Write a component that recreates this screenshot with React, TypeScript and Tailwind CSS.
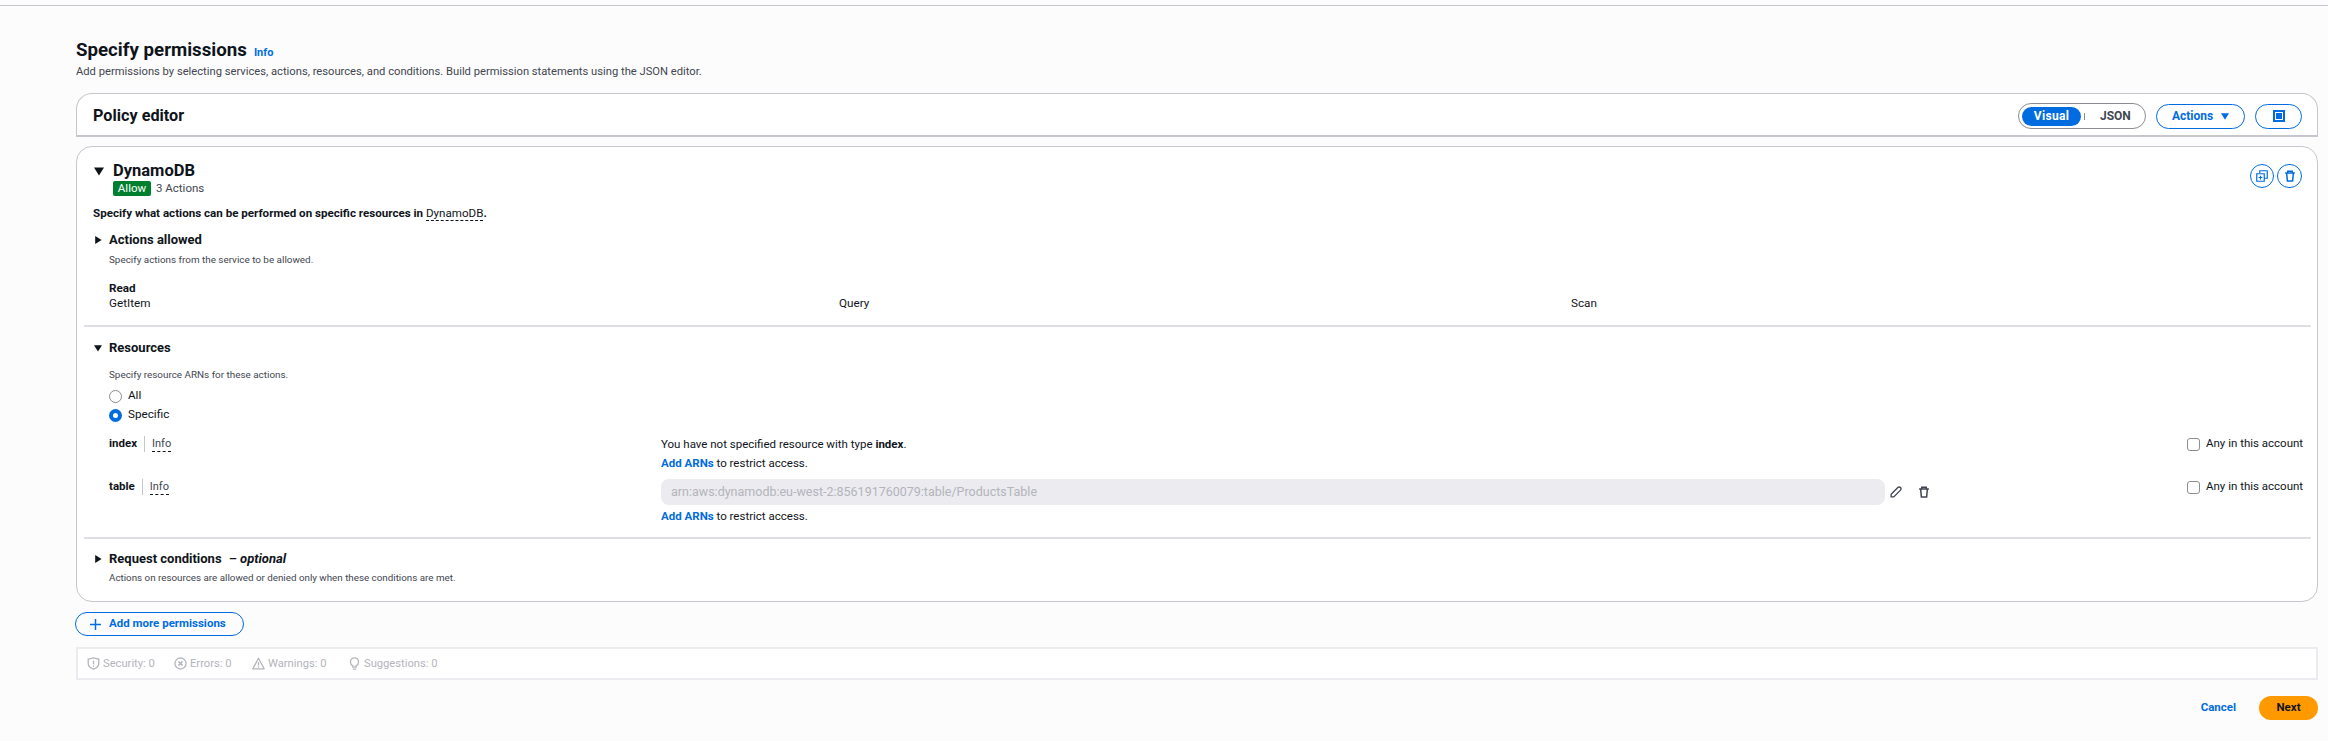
import React from 'react';

const Caret = ({ open, className }: { open?: boolean; className?: string }) => (
  <svg viewBox="0 0 10 10" className={className}>
    {open ? <path d="M0 1.5h10L5 9.5z" fill="#0f141a" /> : <path d="M1.5 0v10L9.5 5z" fill="#0f141a" />}
  </svg>
);

const TrashIcon = ({ className }: { className?: string }) => (
  <svg viewBox="0 0 16 16" fill="none" stroke="currentColor" strokeWidth="2" className={className}>
    <path d="M1.5 4h13M5 4V1.5h6V4M3.5 4l1 10.5h7l1-10.5" />
  </svg>
);

const ShieldIcon = () => (
  <svg viewBox="0 0 16 16" fill="none" stroke="#b4b4bb" strokeWidth="1.6" className="w-[13px] h-[13px]">
    <path d="M1.5 2.5 8 1l6.5 1.5V8c0 3.2-2.8 5.6-6.5 7-3.7-1.4-6.5-3.8-6.5-7z" />
    <path d="M8 4.5v4.5M8 10.5v1.5" />
  </svg>
);

const ErrorIcon = () => (
  <svg viewBox="0 0 16 16" fill="none" stroke="#b4b4bb" strokeWidth="1.6" className="w-[13px] h-[13px]">
    <circle cx="8" cy="8" r="6.8" />
    <path d="m5.5 5.5 5 5M10.5 5.5l-5 5" strokeWidth="2" />
  </svg>
);

const WarningIcon = () => (
  <svg viewBox="0 0 16 16" fill="none" stroke="#b4b4bb" strokeWidth="1.6" className="w-[13px] h-[13px]">
    <path d="M8 1.5 15 14.5H1z" strokeLinejoin="round" />
    <path d="M8 6v4.5M8 11.5v1.5" />
  </svg>
);

const BulbIcon = () => (
  <svg viewBox="0 0 16 16" fill="none" stroke="#b4b4bb" strokeWidth="1.6" className="w-[13px] h-[13px]">
    <path d="M6 12.5V11C4.2 10 3 8.4 3 6.2 3 3.3 5.2 1 8 1s5 2.3 5 5.2c0 2.2-1.2 3.8-3 4.8v1.5z" />
    <path d="M6 15h4" />
  </svg>
);

const StatusItem = ({ icon, label, className }: { icon: React.ReactNode; label: string; className: string }) => (
  <div className={`flex items-center gap-[3px] ${className}`}>
    {icon}
    <span>{label}</span>
  </div>
);

const ResourceLabel = ({ name }: { name: string }) => (
  <div className="flex items-center h-[16px] w-[552px]">
    <span className="font-bold text-[11.5px]">{name}</span>
    <span className="w-px h-[16px] bg-[#c6c6cd] mx-[7px]" />
    <span className="text-[11px] leading-[14px] text-[#424650] border-b border-dashed border-[#0f141a]">Info</span>
  </div>
);

const AnyCheck = () => (
  <label className="flex items-center gap-[6px] text-[11.5px] w-[124px] h-[16px] whitespace-nowrap">
    <span className="w-[13px] h-[13px] shrink-0 rounded-[3px] border border-[#8c8c94] bg-white" />
    Any in this account
  </label>
);

const App: React.FC = () => {
  return (
    <div className="w-[2328px] h-[741px] bg-[#fcfcfc] text-[#0f141a] overflow-hidden" style={{ fontFamily: 'Roboto, sans-serif' }}>
      <div className="h-[5px]" />
      <div className="h-px bg-[#c6c6cd]" />

      <div className="pl-[76px] pr-[10px]">
        <div className="flex items-baseline pt-[31px] h-[58px]">
          <h1 className="text-[18.7px] leading-[26px] font-bold">Specify permissions</h1>
          <span className="ml-[7px] text-[11px] font-bold text-[#006ce0]">Info</span>
        </div>
        <p className="text-[11.2px] leading-[16px] text-[#424650] mt-[0px]">
          Add permissions by selecting services, actions, resources, and conditions. Build permission statements using the JSON editor.
        </p>

        {/* Policy editor header */}
        <div className="mt-[13px] h-[44px] bg-white rounded-t-[16px] border border-b-2 border-[#c6c6cd] flex items-center pl-[16px] pr-[15px] pt-[3px]">
          <h2 className="text-[16.2px] font-bold">Policy editor</h2>
          <div className="ml-auto flex items-center">
            <div className="w-[128px] h-[26px] rounded-full border border-[#8c8c94] flex items-center pl-[3px]">
              <span className="w-[59px] h-[19px] rounded-full bg-[#006ce0] text-white text-[12px] tracking-[0.3px] font-bold flex items-center justify-center">Visual</span>
              <span className="w-px h-[7px] bg-[#8c8c94] ml-[3px]" />
              <span className="ml-[15px] text-[12px] font-bold text-[#424650]">JSON</span>
            </div>
            <button className="ml-[10px] w-[89px] h-[25px] rounded-full border border-[#006ce0] text-[#006ce0] text-[12px] font-bold flex items-center justify-center gap-[8px]">
              Actions
              <svg viewBox="0 0 10 8" className="w-[8px] h-[7px]"><path d="M0 0h10L5 8z" fill="#006ce0" /></svg>
            </button>
            <button className="ml-[10px] w-[47px] h-[25px] rounded-full border border-[#006ce0] flex items-center justify-center">
              <span className="w-[12px] h-[12px] border-2 border-[#006ce0] flex items-center justify-center">
                <span className="w-[6px] h-[6px] bg-[#006ce0]" />
              </span>
            </button>
          </div>
        </div>

        {/* Permission block */}
        <div className="mt-[9px] h-[456px] bg-white rounded-[16px] border border-[#c6c6cd] pl-[7px] pr-[6px]">
          <div className="flex pl-[10px] pr-[9px] pt-[14px] h-[58px]">
            <Caret open className="w-[10px] h-[10px] mt-[5px]" />
            <div className="ml-[9px]">
              <div className="text-[16.5px] leading-[19px] font-bold">DynamoDB</div>
              <div className="flex items-center text-[11.5px] text-[#424650]">
                <span className="w-[38px] h-[15px] rounded-[2px] bg-[#00802f] text-white text-[11.5px] flex items-center justify-center">Allow</span>
                <span className="ml-[5px]">3 Actions</span>
              </div>
            </div>
            <div className="ml-auto flex gap-[3px] mt-[3px] text-[#006ce0]">
              <button className="w-[24px] h-[24px] rounded-full border border-[#006ce0] flex items-center justify-center">
                <svg viewBox="0 0 16 16" fill="none" stroke="currentColor" strokeWidth="1.6" className="w-[12px] h-[12px]">
                  <path d="M5 4V1h10v10h-4" />
                  <path d="M1 5h10v10H1z" />
                  <path d="M6 7.5v5M3.5 10h5" />
                </svg>
              </button>
              <button className="w-[25px] h-[24px] rounded-full border border-[#006ce0] flex items-center justify-center">
                <TrashIcon className="w-[12px] h-[12px]" />
              </button>
            </div>
          </div>

          <p className="pl-[9px] text-[11.6px] leading-[16px] font-bold">
            Specify what actions can be performed on specific resources in{' '}
            <span className="font-normal border-b border-dashed border-[#0f141a]">DynamoDB</span>.
          </p>

          {/* Actions allowed */}
          <div className="h-[106px] pl-[10px] pt-[10px] border-b-2 border-[#dedee3]">
            <div className="flex items-center h-[18px]">
              <Caret className="w-[8px] h-[8px]" />
              <h3 className="ml-[7px] text-[13px] font-bold">Actions allowed</h3>
            </div>
            <p className="ml-[15px] mt-[4px] text-[9.9px] leading-[14px] text-[#424650]">Specify actions from the service to be allowed.</p>
            <div className="ml-[15px] mt-[14px] text-[11.7px] leading-[15px]">
              <div className="font-bold">Read</div>
              <div className="grid grid-cols-[730px_732px_1fr]">
                <span>GetItem</span>
                <span>Query</span>
                <span>Scan</span>
              </div>
            </div>
          </div>

          {/* Resources */}
          <div className="h-[212px] pl-[10px] pt-[12px] border-b-2 border-[#dedee3]">
            <div className="flex items-center h-[18px]">
              <Caret open className="w-[8px] h-[8px]" />
              <h3 className="ml-[7px] text-[13px] font-bold">Resources</h3>
            </div>
            <div className="ml-[15px]">
              <p className="mt-[11px] text-[9.9px] leading-[14px] text-[#424650]">Specify resource ARNs for these actions.</p>
              <div className="mt-[5px] flex items-center h-[18px] text-[11.7px] gap-[6px]">
                <span className="w-[13px] h-[13px] rounded-full border border-[#8c8c94] bg-white" />
                All
              </div>
              <div className="mt-[1px] flex items-center h-[18px] text-[11.7px] gap-[6px]">
                <span className="w-[13px] h-[13px] rounded-full border-[4px] border-[#006ce0] bg-white" />
                Specific
              </div>

              <div className="mt-[12px] flex items-start text-[11.5px]">
                <ResourceLabel name="index" />
                <div className="flex-1">
                  <div className="leading-[16px]">You have not specified resource with type <b>index</b>.</div>
                  <div className="mt-[3px] leading-[16px]"><span className="font-bold text-[#006ce0]">Add ARNs</span> to restrict access.</div>
                </div>
                <AnyCheck />
              </div>

              <div className="mt-[8px] flex items-start text-[11.5px]">
                <ResourceLabel name="table" />
                <div className="flex-1">
                  <div className="flex items-center">
                    <div className="w-[1224px] h-[26px] rounded-[8px] bg-[#ebebf0] text-[12.5px] text-[#b4b4bb] pl-[10px] flex items-center">
                      arn:aws:dynamodb:eu-west-2:856191760079:table/ProductsTable
                    </div>
                    <svg viewBox="0 0 16 16" fill="none" stroke="#424650" strokeWidth="1.8" className="w-[12px] h-[12px] ml-[5px]">
                      <path d="M1.5 14.5v-3.5L10.5 2a2 2 0 0 1 3.5 3.5L5 14.5z" />
                    </svg>
                    <TrashIcon className="w-[12px] h-[12px] ml-[16px] text-[#424650]" />
                  </div>
                  <div className="mt-[3px] leading-[16px]"><span className="font-bold text-[#006ce0]">Add ARNs</span> to restrict access.</div>
                </div>
                <AnyCheck />
              </div>
            </div>
          </div>

          {/* Request conditions */}
          <div className="pl-[10px] pt-[11px]">
            <div className="flex items-center h-[18px]">
              <Caret className="w-[8px] h-[8px]" />
              <h3 className="ml-[7px] text-[13px] font-bold">
                Request conditions <span className="ml-[4px] italic">– optional</span>
              </h3>
            </div>
            <p className="ml-[15px] mt-[3px] text-[9.8px] leading-[14px] text-[#424650]">Actions on resources are allowed or denied only when these conditions are met.</p>
          </div>
        </div>

        <button className="mt-[10px] ml-[-1px] w-[169px] h-[24px] rounded-full border border-[#006ce0] text-[#006ce0] text-[11.5px] font-bold flex items-center pl-[14px] gap-[8px]">
          <svg viewBox="0 0 12 12" className="w-[11px] h-[11px]" fill="none" stroke="#006ce0" strokeWidth="1.6"><path d="M6 0v12M0 6h12" /></svg>
          Add more permissions
        </button>

        {/* Validation summary */}
        <div className="mt-[11px] h-[33px] bg-white border-2 border-[#ebebf0] flex items-center pl-[9px] pt-[1px] text-[11.2px] text-[#b4b4bb]">
          <StatusItem icon={<ShieldIcon />} label="Security: 0" className="w-[87px]" />
          <StatusItem icon={<ErrorIcon />} label="Errors: 0" className="w-[78px]" />
          <StatusItem icon={<WarningIcon />} label="Warnings: 0" className="w-[96px]" />
          <StatusItem icon={<BulbIcon />} label="Suggestions: 0" className="" />
        </div>

        <div className="mt-[16px] flex items-center justify-end">
          <span className="text-[11.5px] font-bold text-[#006ce0]">Cancel</span>
          <button className="ml-[23px] w-[59px] h-[24px] rounded-full bg-[#ff9900] text-[11.5px] font-bold">Next</button>
        </div>
      </div>
    </div>
  );
};

export default App;
